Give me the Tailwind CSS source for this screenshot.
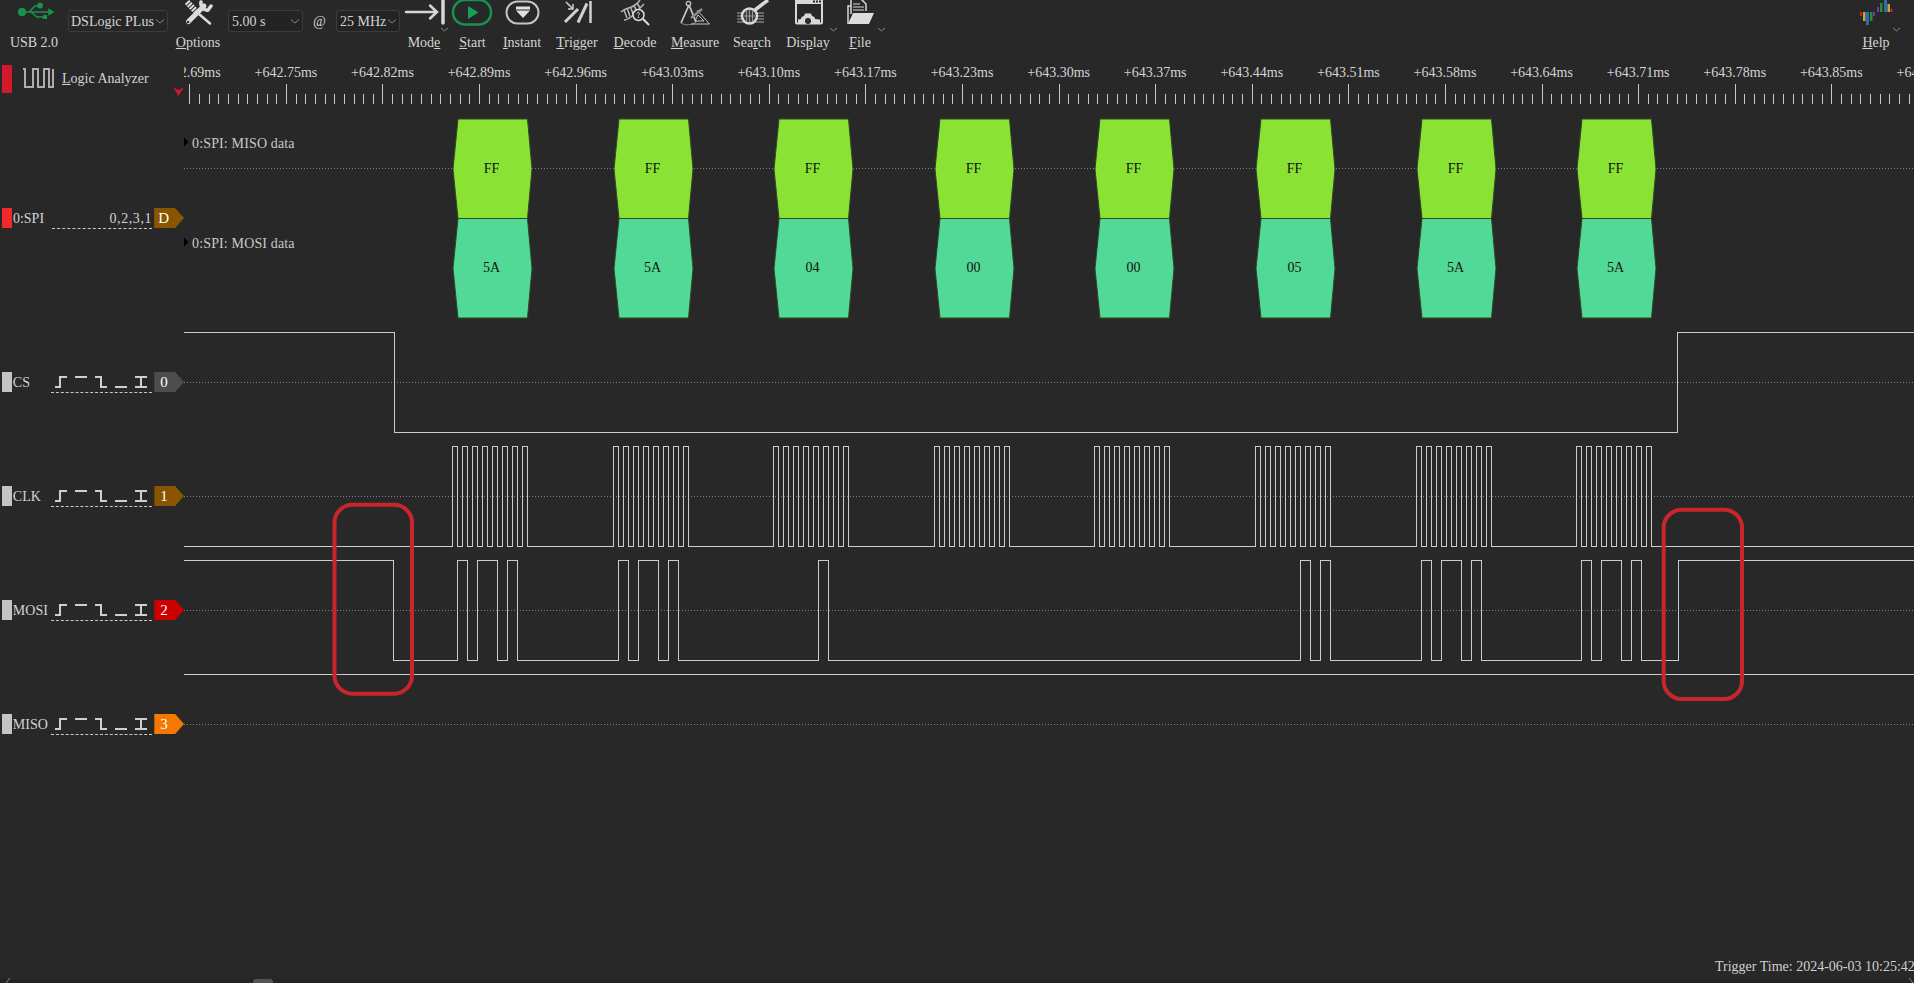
<!DOCTYPE html>
<html lang="en">
<head>
    <meta charset="UTF-8">
    <title>DSView</title>
    <script src="https://cdn.jsdelivr.net/npm/@tailwindcss/browser@4"></script>
</head>
<body class="bg-[#282828]">
    <div class="relative flex flex-col w-[1914px] h-[983px] overflow-hidden bg-[#282828] text-[#d4d4d4] text-[14px] font-['Liberation_Serif',serif]">

        <!-- toolbar -->
        <div class="flex h-[52px] shrink-0">
            <div class="flex flex-col items-center w-[68px]">
                <svg class="w-full h-[30px]" viewBox="0 0 68 30" fill="none" stroke="#17924f" stroke-width="1.5">
                    <circle cx="22" cy="12" r="3.5" fill="#17924f"/>
                    <path d="M22 12H50M29 12L35 6H39M31 12L37 17H44"/>
                    <circle cx="40" cy="5.5" r="2.2" fill="#17924f"/>
                    <rect x="43" y="15" width="4" height="4" fill="#17924f" stroke="none"/>
                    <path d="M49 9.5L53 12L49 14.5Z" fill="#17924f"/>
                </svg>
                <span class="mt-[5px] leading-4">USB 2.0</span>
            </div>
            <div class="flex items-center justify-between w-[100px] h-[22px] mt-[10px] pl-[2px] pr-[3px] rounded-[3px] border border-[#3c3c3c] bg-[#262626]">
                <span>DSLogic PLus</span>
                <svg class="w-[8px] h-[5px]" viewBox="0 0 8 5" fill="none" stroke="#888"><path d="M0 0.5L4 4L8 0.5"/></svg>
            </div>
            <div class="flex flex-col items-center w-[60px]">
                <svg class="w-full h-[30px]" viewBox="168 0 60 30" fill="none" stroke="#dcdcdc" stroke-linecap="round">
                    <path d="M187 2L196 11.500" stroke-width="6" stroke-dasharray="2 1" stroke-linecap="butt"/>
                    <path d="M196 11.500L210 23.500" stroke-width="2.500"/>
                    <path d="M188.500 21.500L204 6" stroke-width="5"/>
                    <path d="M201 2C200 6 204 11 208 10L211 6" stroke-width="3.500"/>
                    <circle cx="188" cy="22" r="1.300" fill="#282828" stroke="none"/>
                </svg>
                <span class="mt-[5px] leading-4"><u>O</u>ptions</span>
            </div>
            <div class="flex items-center justify-between w-[75px] h-[22px] mt-[10px] px-[3px] rounded-[3px] border border-[#3c3c3c] bg-[#232323]">
                <span>5.00 s</span>
                <svg class="w-[8px] h-[5px]" viewBox="0 0 8 5" fill="none" stroke="#888"><path d="M0 0.5L4 4L8 0.5"/></svg>
            </div>
            <div class="flex justify-center w-[33px] mt-[14px] leading-4">@</div>
            <div class="flex items-center justify-between w-[64px] h-[22px] mt-[10px] px-[3px] rounded-[3px] border border-[#3c3c3c] bg-[#232323]">
                <span>25 MHz</span>
                <svg class="w-[8px] h-[5px]" viewBox="0 0 8 5" fill="none" stroke="#888"><path d="M0 0.5L4 4L8 0.5"/></svg>
            </div>

            <div class="flex flex-col items-center w-[48px]">
                <svg class="w-full h-[30px] overflow-visible" viewBox="400 0 48 30" fill="none" stroke="#d6d6d6">
                    <path d="M406 12H436M430 5.500L437 12L430 18.500" stroke-width="2.500" stroke-linecap="round"/>
                    <path d="M443 0V23" stroke-width="3.500" stroke-linecap="round"/>
                    <path d="M441 28L444.500 31L448 28" stroke="#888"/>
                </svg>
                <span class="mt-[5px] leading-4">Mod<u>e</u></span>
            </div>
            <div class="flex flex-col items-center w-[49px]">
                <svg class="w-full h-[30px]" viewBox="448 0 49 30" fill="none">
                    <rect x="453" y="0" width="38" height="24.500" rx="12" stroke="#17924f" stroke-width="2.500"/>
                    <path d="M468 6L478.500 12.500L468 19Z" fill="#17a055"/>
                </svg>
                <span class="mt-[5px] leading-4"><u>S</u>tart</span>
            </div>
            <div class="flex flex-col items-center w-[50px]">
                <svg class="w-full h-[30px]" viewBox="497 0 50 30" fill="none">
                    <rect x="506.500" y="1.500" width="32" height="22" rx="11" stroke="#c4c4c4" stroke-width="2"/>
                    <rect x="516" y="6.500" width="14" height="3" fill="#e0e0e0"/>
                    <path d="M516 10.500H530L523 18Z" fill="#e0e0e0"/>
                </svg>
                <span class="mt-[5px] leading-4"><u>I</u>nstant</span>
            </div>
            <div class="flex flex-col items-center w-[60px]">
                <svg class="w-full h-[30px]" viewBox="547 0 60 30" fill="none" stroke="#d0d0d0">
                    <path d="M565 22L578 9" stroke-width="3"/>
                    <path d="M578 22.500L587 3.500" stroke-width="3"/>
                    <path d="M590.500 1V23" stroke-width="2.500"/>
                    <path d="M566 2L573 9M573 4V9H568" stroke-width="1.500"/>
                </svg>
                <span class="mt-[5px] leading-4"><u>T</u>rigger</span>
            </div>
            <div class="flex flex-col items-center w-[56px]">
                <svg class="w-full h-[30px]" viewBox="607 0 56 30" fill="none" stroke="#b4b4b4">
                    <path d="M621 12C627 6 633 10 640 0M624 20C630 20 636 12 644 4" stroke-width="1.500"/>
                    <path d="M624 10L627 18M627.500 9L630 16.500M631 8L633 14M634 6L637 11M637 3L640 8" stroke-width="1.500"/>
                    <circle cx="638.500" cy="15" r="5.500" stroke="#e0e0e0" stroke-width="1.500" fill="#282828"/>
                    <path d="M643 19L649 25" stroke="#e0e0e0" stroke-width="2"/>
                    <path d="M637 13.500C637.500 11.500 640.500 12.500 639 14.500L638.500 15.500M638.500 16.500V18" stroke="#e0e0e0"/>
                </svg>
                <span class="mt-[5px] leading-4"><u>D</u>ecode</span>
            </div>
            <div class="flex flex-col items-center w-[64px]">
                <svg class="w-full h-[30px]" viewBox="663 0 64 30" fill="none" stroke="#c4c4c4">
                    <path d="M689 5L681 23M689 5L696 22" stroke-width="1.800"/>
                    <circle cx="688.500" cy="3.500" r="2.200" stroke-width="1.300"/>
                    <path d="M681 23C686 26 692 25 696 22" stroke="#888"/>
                    <path d="M691 24H709.500L697 10" stroke-width="1"/>
                    <path d="M695 21H704L698 15Z" stroke-width="1"/>
                    <path d="M691 18L702 9" stroke-width="2.500" stroke="#8a8a8a"/>
                </svg>
                <span class="mt-[5px] leading-4"><u>M</u>easure</span>
            </div>
            <div class="flex flex-col items-center w-[50px]">
                <svg class="w-full h-[30px]" viewBox="727 0 50 30" fill="none">
                    <path d="M737 13H764M737 16H764M737 19H764M737 22H764" stroke="#7d7d7d" stroke-width="1.500"/>
                    <circle cx="749.500" cy="16" r="7.500" fill="#3a3a3a" stroke="#d8d8d8" stroke-width="2.500"/>
                    <path d="M744 16H755M749.500 10V22M746.500 11V21M752.500 11V21" stroke="#9a9a9a"/>
                    <path d="M755 10L768 0" stroke="#d8d8d8" stroke-width="3.500"/>
                </svg>
                <span class="mt-[5px] leading-4">Sea<u>r</u>ch</span>
            </div>
            <div class="flex flex-col items-center w-[62px]">
                <svg class="w-full h-[30px] overflow-visible" viewBox="777 0 62 30" fill="none">
                    <rect x="796" y="-2" width="26" height="25.500" rx="1" stroke="#d8d8d8" stroke-width="2"/>
                    <rect x="796" y="-2" width="26" height="6" fill="#d8d8d8"/>
                    <path d="M813 0.500h2v2h-2zM816 0.500h2v2h-2zM819 0.500h2v2h-2z" fill="#282828"/>
                    <path d="M798 23V19.500L801 19L801.500 17L804 16L805 13.500H811L812 16L814.500 17L815 19L820 19.500V23Z" fill="#d8d8d8"/>
                    <circle cx="808" cy="21" r="3" fill="#282828"/>
                    <path d="M830 28L833.500 31L837 28" stroke="#888"/>
                </svg>
                <span class="mt-[5px] leading-4">Dis<u>p</u>lay</span>
            </div>
            <div class="flex flex-col items-center w-[46px]">
                <svg class="w-full h-[30px] overflow-visible" viewBox="839 0 46 30" fill="none">
                    <path d="M848 24V6H852" stroke="#d8d8d8" stroke-width="1.500"/>
                    <path d="M851 14V-1H861L866 4V11" stroke="#d8d8d8" stroke-width="1.500" fill="#282828"/>
                    <path d="M853 4H860M853 7H864M853 10H864" stroke="#d8d8d8"/>
                    <path d="M848 24L853 13H874L869 24Z" fill="#dcdcdc"/>
                    <path d="M878 28L881.500 31L885 28" stroke="#888"/>
                </svg>
                <span class="mt-[5px] leading-4 -ml-[4px]"><u>F</u>ile</span>
            </div>

            <div class="flex flex-col items-center w-[44px] ml-auto mr-[14px]">
                <svg class="w-full h-[30px] overflow-visible" viewBox="1856 0 44 30" fill="none">
                    <rect x="1860" y="12" width="2" height="4" fill="#c62828"/>
                    <rect x="1863" y="12" width="2.500" height="9" fill="#c9a44c"/>
                    <rect x="1866" y="12" width="3" height="13" fill="#2a6fa8"/>
                    <rect x="1870" y="12" width="2.500" height="9" fill="#2b8a3e"/>
                    <rect x="1873" y="12" width="2" height="4" fill="#6a3fa0"/>
                    <rect x="1877" y="7" width="2" height="5" fill="#6a3fa0"/>
                    <rect x="1880" y="3" width="2.500" height="9" fill="#2b8a3e"/>
                    <rect x="1884" y="0" width="3" height="12" fill="#2a6fa8"/>
                    <rect x="1887.500" y="4" width="2.500" height="8" fill="#c9a44c"/>
                    <rect x="1890.500" y="9" width="2" height="3" fill="#c62828"/>
                    <path d="M1893 28L1896.500 31L1900 28" stroke="#888"/>
                </svg>
                <span class="mt-[5px] leading-4 -ml-[4px]"><u>H</u>elp</span>
            </div>
        </div>

        <div class="flex flex-1">
            <!-- channel headers -->
            <div class="flex flex-col w-[184px] shrink-0">
                <svg class="hidden">
                    <symbol id="trig" viewBox="0 0 100 12">
                        <path d="M1 11H6V1H13M21 1H33M41 1H47V11H53M61 11H73M81 1H93M81 11H93M87 1V11" fill="none" stroke="#cfcfcf" stroke-width="2"/>
                    </symbol>
                </svg>

                <div class="relative flex items-center h-[28px] mt-[13px]">
                    <div class="w-[10px] h-[28px] ml-[2px] bg-[#d3182c]"></div>
                    <svg class="w-[32px] h-[20px] ml-[10px] -mt-[3px]" viewBox="0 0 32 20" fill="none" stroke="#adadad" stroke-width="2">
                        <path d="M1 1H3V19H11V1H16V19H22V1H27V19H31V1"/>
                    </svg>
                    <span class="ml-[8px] -mt-[2px]"><u>L</u>ogic Analyzer</span>
                    <div class="absolute left-[173px] top-[22px] w-[11px] h-[9px] bg-[#d3182c] [clip-path:polygon(0_0,50%_35%,100%_0,50%_100%)]"></div>
                </div>

                <div class="flex items-center h-5 mt-[115px]">
                    <div class="w-[10px] h-5 ml-[2px] bg-[#ee2a2a]"></div>
                    <span class="w-[39px] ml-px">0:SPI</span>
                    <div class="flex justify-end w-[101px] h-[21px] self-start mr-[2px] tracking-[0.6px] border-b border-dashed border-[#c8c8c8]">0,2,3,1</div>
                    <div class="flex items-center w-[30px] h-5 pl-[4px] text-white text-[15px] bg-[#8a5500] [clip-path:polygon(0_0,70%_0,100%_50%,70%_100%,0_100%)]">D</div>
                </div>

                <div class="flex items-center h-5 mt-[144px]">
                    <div class="w-[10px] h-5 ml-[2px] bg-[#c4c4c4]"></div>
                    <span class="w-[39px] ml-px">CS</span>
                    <div class="w-[101px] h-[21px] self-start mr-[2px] pt-[4px] pl-[3px] border-b border-dashed border-[#c8c8c8]"><svg class="w-[100px] h-[12px]"><use href="#trig"/></svg></div>
                    <div class="flex items-center w-[30px] h-5 pl-[6px] text-white text-[15px] bg-[#4d4d4d] [clip-path:polygon(0_0,70%_0,100%_50%,70%_100%,0_100%)]">0</div>
                </div>

                <div class="flex items-center h-5 mt-[94px]">
                    <div class="w-[10px] h-5 ml-[2px] bg-[#c4c4c4]"></div>
                    <span class="w-[39px] ml-px">CLK</span>
                    <div class="w-[101px] h-[21px] self-start mr-[2px] pt-[4px] pl-[3px] border-b border-dashed border-[#c8c8c8]"><svg class="w-[100px] h-[12px]"><use href="#trig"/></svg></div>
                    <div class="flex items-center w-[30px] h-5 pl-[6px] text-white text-[15px] bg-[#8a5500] [clip-path:polygon(0_0,70%_0,100%_50%,70%_100%,0_100%)]">1</div>
                </div>

                <div class="flex items-center h-5 mt-[94px]">
                    <div class="w-[10px] h-5 ml-[2px] bg-[#c4c4c4]"></div>
                    <span class="w-[39px] ml-px">MOSI</span>
                    <div class="w-[101px] h-[21px] self-start mr-[2px] pt-[4px] pl-[3px] border-b border-dashed border-[#c8c8c8]"><svg class="w-[100px] h-[12px]"><use href="#trig"/></svg></div>
                    <div class="flex items-center w-[30px] h-5 pl-[6px] text-white text-[15px] bg-[#cc0000] [clip-path:polygon(0_0,70%_0,100%_50%,70%_100%,0_100%)]">2</div>
                </div>

                <div class="flex items-center h-5 mt-[94px]">
                    <div class="w-[10px] h-5 ml-[2px] bg-[#c4c4c4]"></div>
                    <span class="w-[39px] ml-px">MISO</span>
                    <div class="w-[101px] h-[21px] self-start mr-[2px] pt-[4px] pl-[3px] border-b border-dashed border-[#c8c8c8]"><svg class="w-[100px] h-[12px]"><use href="#trig"/></svg></div>
                    <div class="flex items-center w-[30px] h-5 pl-[6px] text-white text-[15px] bg-[#f57900] [clip-path:polygon(0_0,70%_0,100%_50%,70%_100%,0_100%)]">3</div>
                </div>
            </div>

            <!-- view, drawn in page coordinates -->
            <svg id="view" class="block w-[1730px] h-[931px]" viewBox="184 52 1730 931" fill="none" shape-rendering="crispEdges">
                <g id="ruler" stroke="#c8c8c8"></g>
                <g id="labels" fill="#d4d4d4" font-size="14" text-anchor="middle"></g>

                <path d="M184 168.500H1914M184 382.500H1914M184 496.500H1914M184 610.500H1914M184 724.500H1914" stroke="#808080" stroke-dasharray="1 2"/>
                <path id="cs" stroke="#cccccc"/>
                <path id="clk" stroke="#cccccc"/>
                <path id="mosi" stroke="#cccccc"/>
                <path d="M184 674.500H1914" stroke="#cccccc"/>

                <g id="blocks" font-size="14" text-anchor="middle" shape-rendering="auto"></g>

                <path d="M184 137L188 142L184 147Z" fill="#000"/>
                <text x="192" y="148" fill="#c8c8c8" font-size="14" letter-spacing="0.15">0:SPI: MISO data</text>
                <path d="M184 237L188 242L184 247Z" fill="#000"/>
                <text x="192" y="248" fill="#c8c8c8" font-size="14" letter-spacing="0.15">0:SPI: MOSI data</text>

                <g stroke="#c8252c" stroke-width="4" shape-rendering="auto">
                    <rect x="334.500" y="504.700" width="77.500" height="189" rx="18"/>
                    <rect x="1663.700" y="509.700" width="78.300" height="189.300" rx="18"/>
                </g>
            </svg>
        </div>

        <div class="absolute left-[1715px] top-[959px] leading-4 whitespace-nowrap text-[#d0d0d0]">Trigger Time: 2024-06-03 10:25:42</div>

        <!-- scrollbar -->
        <div class="absolute left-0 right-0 bottom-0 h-[4px] bg-[#242424]">
            <div class="ml-[253px] w-[20px] h-[4px] rounded-t-[3px] bg-[#555]"></div>
        </div>
        <svg class="absolute left-[5px] bottom-0 w-[6px] h-[5px]" viewBox="0 0 6 5" fill="none" stroke="#888"><path d="M5 0L1 5"/></svg>
        <svg class="absolute right-0 bottom-0 w-[6px] h-[5px]" viewBox="0 0 6 5" fill="none" stroke="#888"><path d="M1 0L5 5"/></svg>
    </div>

    <script>
        const NS = "http://www.w3.org/2000/svg";
        const GROUP = 160.6;

        // time ruler
        const labels = ["642.69", "642.75", "642.82", "642.89", "642.96", "643.03", "643.10", "643.17", "643.23",
            "643.30", "643.37", "643.44", "643.51", "643.58", "643.64", "643.71", "643.78", "643.85", "643.92"];
        let ticks = "";
        for (let i = 0; i < 190; i++) {
            const x = Math.round(189.3 + 9.659 * i) + 0.5;
            ticks += `M${x} ${i % 10 == 0 ? 84 : 94}V104`;
        }
        const rulerPath = document.createElementNS(NS, "path");
        rulerPath.setAttribute("d", ticks);
        document.getElementById("ruler").appendChild(rulerPath);
        labels.forEach((t, i) => {
            const el = document.createElementNS(NS, "text");
            el.setAttribute("x", 189.3 + 96.59 * i);
            el.setAttribute("y", 76.5);
            el.textContent = "+" + t + "ms";
            document.getElementById("labels").appendChild(el);
        });

        // CS
        document.getElementById("cs").setAttribute("d", "M184 332.500H394.500V432.500H1677.500V332.500H1914");

        // CLK, 8 pulses per byte
        let clk = "M184 546.500";
        for (let g = 0; g < 8; g++) {
            const base = 452.5 + Math.round(GROUP * g);
            for (let k = 0; k < 8; k++) {
                clk += `H${base + 10 * k}V446.500H${base + 10 * k + 5}V546.500`;
            }
        }
        document.getElementById("clk").setAttribute("d", clk + "H1914");

        // MOSI, sampled from the decoded bytes
        const bytes = [0x5A, 0x5A, 0x04, 0x00, 0x00, 0x05, 0x5A, 0x5A];
        let mosi = "M184 560.500H393.500V660.500";
        let level = 0;
        bytes.forEach((b, g) => {
            const base = 447.5 + Math.round(GROUP * g);
            for (let k = 0; k < 8; k++) {
                const bit = (b >> (7 - k)) & 1;
                if (bit != level) {
                    mosi += `H${base + 10 * k}V${bit ? 560.5 : 660.5}`;
                    level = bit;
                }
            }
            if (level) {
                mosi += `H${base + 80}V660.5`;
                level = 0;
            }
        });
        document.getElementById("mosi").setAttribute("d", mosi + "H1678.500V560.500H1914");

        // decoded annotations
        function block(x, top, color, text) {
            const poly = document.createElementNS(NS, "polygon");
            const mid = top + 50, bot = top + 99.5;
            poly.setAttribute("points", `${x + 5},${top} ${x + 74.5},${top} ${x + 79},${mid} ${x + 74.5},${bot} ${x + 5},${bot} ${x},${mid}`);
            poly.setAttribute("fill", color);
            poly.setAttribute("stroke", "#2c4a24");
            const el = document.createElementNS(NS, "text");
            el.setAttribute("x", x + 38.5);
            el.setAttribute("y", mid + 3.5);
            el.setAttribute("fill", "#111");
            el.textContent = text;
            const parent = document.getElementById("blocks");
            parent.appendChild(poly);
            parent.appendChild(el);
        }
        bytes.forEach((b, g) => {
            const x = 453 + Math.round(GROUP * g);
            block(x, 119, "#8ae234", "FF");
            block(x, 218.5, "#52d997", b.toString(16).toUpperCase().padStart(2, "0"));
        });
    </script>
</body>
</html>
